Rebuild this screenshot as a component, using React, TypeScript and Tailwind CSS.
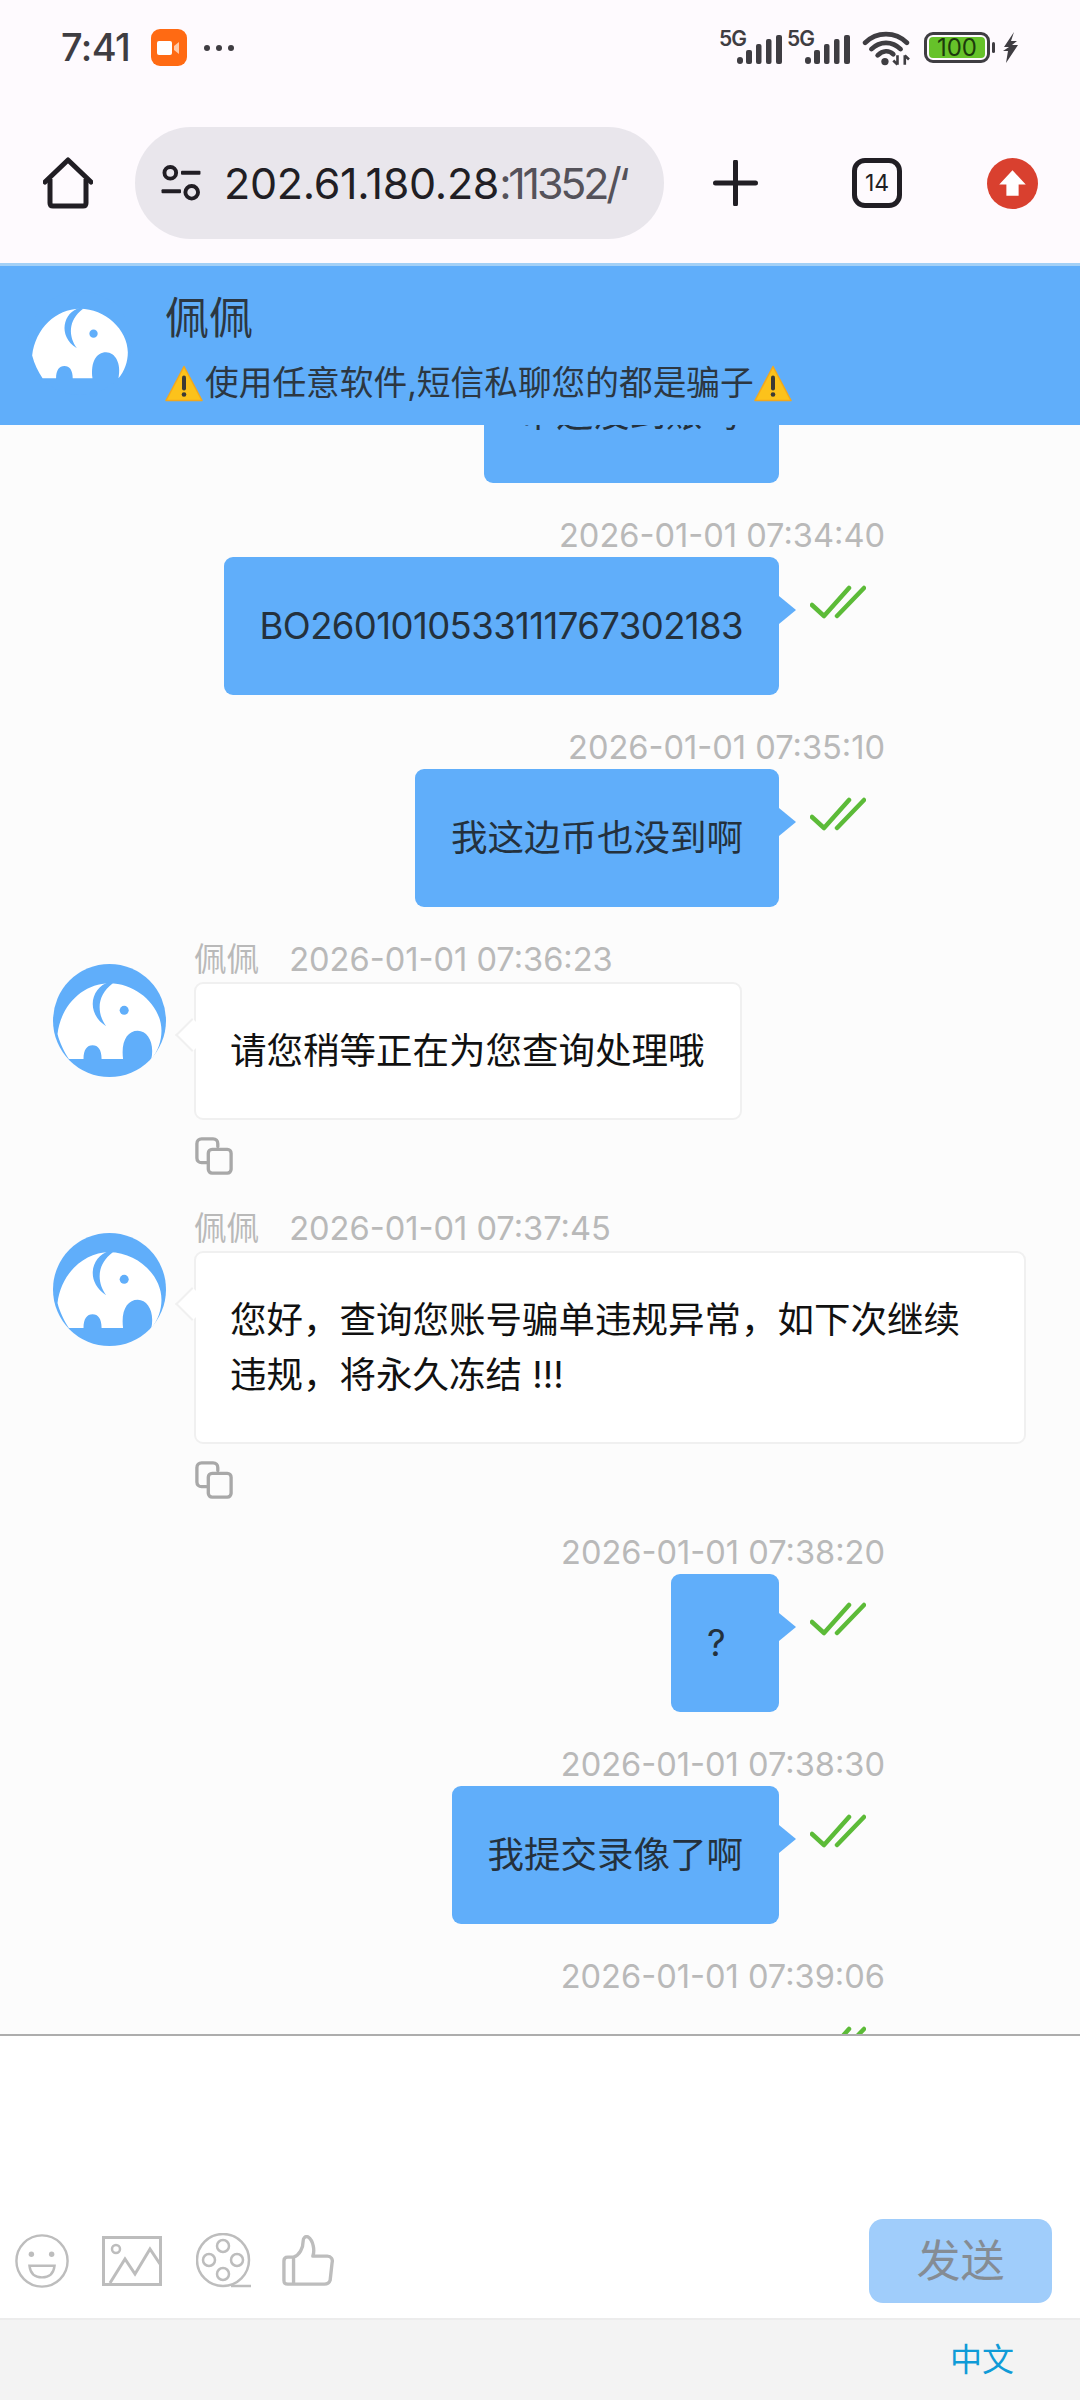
import type { ReactNode } from 'react'

type Msg =
  | { side: 'me'; time: string; text?: string }
  | { side: 'them'; time: string; lines: string }

const MESSAGES: Msg[] = [
  { side: 'me', time: '2026-01-01 07:34:40', text: 'BO2601010533111767302183' },
  { side: 'me', time: '2026-01-01 07:35:10', text: '我这边币也没到啊' },
  { side: 'them', time: '2026-01-01 07:36:23', lines: '请您稍等正在为您查询处理哦' },
  { side: 'them', time: '2026-01-01 07:37:45', lines: '您好，查询您账号骗单违规异常，如下次继续违规，将永久冻结 !!!' },
  { side: 'me', time: '2026-01-01 07:38:20', text: '?' },
  { side: 'me', time: '2026-01-01 07:38:30', text: '我提交录像了啊' },
  { side: 'me', time: '2026-01-01 07:39:06' },
]

function Elephant({ size, ring }: { size: number; ring: string }) {
  return (
    <svg width={size} height={size} viewBox="0 0 100 100" className="shrink-0">
      <circle cx="50" cy="50" r="50" fill={ring} />
      <path
        d="M50 17C27 17 7 36 4 62C6 70 10 78 14 84L27 84C27 76 30 72 35 72C40 72 43 76 43 84L62 84C60 68 66 59 75 59C84 59 90 70 87 84C93 77 96 68 96 59C96 37 74 17 50 17Z"
        fill="#fff"
      />
      <path d="M50 16C34 20 28 43 47 55C39 44 38 28 53 17Z" fill={ring} />
      <circle cx="63" cy="41" r="4" fill={ring} />
    </svg>
  )
}

function Warn() {
  return (
    <svg width="38" height="37" viewBox="0 0 38 36" className="shrink-0 inline-block">
      <path d="M19 1L37 35H1Z" fill="#fcc21b" stroke="#f2a81d" strokeWidth="1.5" strokeLinejoin="round" />
      <rect x="17" y="10" width="4" height="15" rx="2" fill="#3d3a35" />
      <circle cx="19" cy="29" r="2.3" fill="#3d3a35" />
    </svg>
  )
}

function Signal() {
  return (
    <svg width="63" height="34" viewBox="0 0 63 34" className="shrink-0 overflow-visible">
      <text x="0" y="15" fontSize="21" fontWeight="600" fill="#3f3d42" fontFamily="Inter, sans-serif" letterSpacing="-1">5G</text>
      <rect x="18" y="26" width="6" height="7" rx="3" fill="#3f3d42" />
      <rect x="27" y="19" width="6" height="14" rx="2" fill="#3f3d42" />
      <rect x="37" y="13" width="5.5" height="20" rx="2" fill="#3f3d42" />
      <rect x="47" y="8" width="5.5" height="25" rx="2" fill="#3f3d42" />
      <rect x="57" y="4" width="6" height="29" rx="2" fill="#3f3d42" />
    </svg>
  )
}

function StatusBar() {
  return (
    <div className="h-[95px] flex items-center pl-[61px] pr-[61px] text-[#3f3d42]">
      <span className="w-[70px] text-[38px] font-medium tracking-[-0.6px]">7:41</span>
      <div className="ml-[20px] w-[36px] h-[37px] rounded-[9px] bg-[#ff6a13] flex items-center justify-center">
        <svg width="24" height="16" viewBox="0 0 24 16">
          <rect x="0" y="1" width="15" height="14" rx="2" fill="#fff" />
          <path d="M17 6L22 2V14L17 10Z" fill="#ffc9a8" />
        </svg>
      </div>
      <div className="ml-[17px] flex gap-[6px]">
        <span className="w-[6px] h-[6px] rounded-full bg-[#3f3d42]" />
        <span className="w-[6px] h-[6px] rounded-full bg-[#3f3d42]" />
        <span className="w-[6px] h-[6px] rounded-full bg-[#3f3d42]" />
      </div>
      <div className="ml-auto flex items-center">
        <Signal />
        <div className="w-[5px]" />
        <Signal />
        <svg width="48" height="36" viewBox="0 0 46 34" className="ml-[12px]">
          <path d="M3 12C14 1 32 1 43 12" fill="none" stroke="#3f3d42" strokeWidth="4.5" strokeLinecap="round" />
          <path d="M9 18C17 10 29 10 37 18" fill="none" stroke="#3f3d42" strokeWidth="4.5" strokeLinecap="round" />
          <path d="M15 24C20 19 26 19 30 23" fill="none" stroke="#3f3d42" strokeWidth="4.5" strokeLinecap="round" />
          <circle cx="22" cy="30" r="3.5" fill="#3f3d42" />
          <path d="M34 24V33M30 29L34 33M41 33V24M41 24L45 28" stroke="#3f3d42" strokeWidth="2.5" fill="none" />
        </svg>
        <div className="ml-[14px] w-[66px] h-[31px] rounded-[9px] border-[3px] border-[#3f3d42] p-[2px] flex">
          <div className="flex-1 rounded-[4px] bg-[#66c22a] flex items-center justify-center text-[24px] leading-none text-[#1c3a0c]">100</div>
        </div>
        <div className="ml-[2px] w-[3px] h-[11px] rounded-full bg-[#3f3d42]" />
        <svg width="17" height="31" viewBox="0 0 15 31" className="ml-[7px]">
          <path d="M11 0L1 15H6L0 19H5L3 31L15 13H9L14 9H8Z" fill="#3f3d42" />
        </svg>
      </div>
    </div>
  )
}

function BrowserBar() {
  return (
    <div className="h-[168px] flex items-start pt-[32px]">
      <div className="w-[135px] h-[112px] flex items-center pl-[43px]">
        <svg width="50" height="52" viewBox="0 0 50 52">
          <path d="M2 25L25 3L48 25" fill="none" stroke="#211e24" strokeWidth="5" strokeLinecap="round" strokeLinejoin="round" />
          <path d="M7 22V46C7 48 8 49 10 49H40C42 49 43 48 43 46V22" fill="none" stroke="#211e24" strokeWidth="5" strokeLinejoin="round" />
        </svg>
      </div>
      <div className="w-[529px] h-[112px] rounded-full bg-[#e9e6ec] flex items-center pl-[24px]">
        <svg width="44" height="37" viewBox="0 0 44 38" className="shrink-0">
          <circle cx="11" cy="8" r="6" fill="none" stroke="#211e24" strokeWidth="4" />
          <rect x="22" y="6" width="20" height="4" rx="1" fill="#211e24" />
          <rect x="2" y="25" width="20" height="4" rx="1" fill="#211e24" />
          <circle cx="33" cy="28" r="6.5" fill="none" stroke="#211e24" strokeWidth="4" />
        </svg>
        <div className="ml-[21px] whitespace-nowrap text-[43px] leading-none text-[#211e24] tracking-[-0.3px]">
          202.61.180.28<span className="text-[#55525a] tracking-[-3.2px]">:11352/‘</span>
        </div>
      </div>
      <div className="flex-1 h-[112px] flex items-center pl-[49px]">
        <svg width="45" height="46" viewBox="0 0 44 46">
          <path d="M22 2V44M2 23H42" stroke="#211e24" strokeWidth="5" strokeLinecap="round" />
        </svg>
        <div className="ml-[94px] w-[50px] h-[50px] rounded-[13px] border-[5px] border-[#211e24] flex items-center justify-center text-[23px] leading-none text-[#211e24]">14</div>
        <svg width="51" height="51" viewBox="0 0 50 50" className="ml-[85px]">
          <circle cx="25" cy="25" r="25" fill="#d9402f" />
          <path d="M25 12L38 26H31V37H19V26H12Z" fill="#fff" />
        </svg>
      </div>
    </div>
  )
}

function ChatHeader() {
  return (
    <div className="relative z-10 h-[162px] bg-[#60aefa] border-t-[3px] border-[#a3d0f6] flex pl-[28px] shrink-0">
      <div className="pt-[25px]">
        <Elephant size={104} ring="#60aefa" />
      </div>
      <div className="ml-[33px] text-[#2c3742]">
        <div className="text-[44px] leading-[56px] mt-[24px]">佩佩</div>
        <div className="flex items-center text-[33.7px] leading-[44px] mt-[15px]">
          <Warn />
          <span className="ml-[2px]">使用任意软件,短信私聊您的都是骗子</span>
          <Warn />
        </div>
      </div>
    </div>
  )
}

function Checks() {
  return (
    <svg width="56" height="34" viewBox="0 0 56 34" className="absolute left-[31px] top-[28px]">
      <path d="M2 20L14 31L39 3M27 31L54 3" fill="none" stroke="#5cbb38" strokeWidth="4.5" strokeLinecap="round" strokeLinejoin="round" />
    </svg>
  )
}

function Stamp({ children }: { children: ReactNode }) {
  return <div className="h-[74px] pt-[35px] text-[32.6px] leading-[34px] text-[#b9b9b9] whitespace-nowrap">{children}</div>
}

function MineBubble({ text, wide }: { text?: string; wide?: boolean }) {
  // long order numbers sit a little tighter than the CJK messages
  const isCode = !!text && /^[A-Z0-9]+$/.test(text)
  return (
    <div className="flex justify-end">
      {text ? (
        <div className={`relative rounded-[9px] bg-[#60aefa] px-[36px] py-[41px] text-[36.5px] leading-[56px] text-[#24313d] whitespace-nowrap ${wide ? 'min-w-[295px]' : 'min-w-[108px]'} ${isCode ? 'tracking-[-0.6px]' : ''}`}>
          {text}
          <span className="absolute right-[-17px] top-[39px] w-0 h-0 border-y-[14px] border-y-transparent border-l-[17px] border-l-[#60aefa]" />
        </div>
      ) : (
        <div className="h-[138px]" />
      )}
      <div className="relative w-[106px]">
        <Checks />
      </div>
    </div>
  )
}

function Mine({ time, text }: { time: string; text?: string }) {
  return (
    <div className="pr-[195px] flex flex-col">
      <div className="flex justify-end">
        <Stamp>{time}</Stamp>
      </div>
      <MineBubble text={text} />
    </div>
  )
}

function Theirs({ time, lines }: { time: string; lines: string }) {
  return (
    <div>
      <div className="h-[75px] pl-[194px] pt-[35px] flex text-[32.6px] leading-[34px] text-[#b9b9b9]">
        <span>佩佩</span>
        <span className="ml-[30px]">{time}</span>
      </div>
      <div className="flex pl-[53px]">
        <div className="-mt-[18px]">
          <Elephant size={113} ring="#60aefa" />
        </div>
        <div className="ml-[28px] relative max-w-[832px] rounded-[9px] bg-white border-2 border-[#f0f0f0] pl-[34px] pr-[35px] pt-[40px] pb-[39px] text-[36.5px] leading-[55px] text-[#111]">
          {lines}
          <span className="absolute left-[-16px] top-[39px] w-[24px] h-[24px] rotate-45 bg-white border-l-2 border-b-2 border-[#f0f0f0]" />
        </div>
      </div>
      <div className="pl-[195px] pt-[17px] h-[56px]">
        <svg width="38" height="38" viewBox="0 0 40 40" className="block">
          <path d="M12 27H7C4 27 2 25 2 22V7C2 4 4 2 7 2H19C22 2 24 4 24 7V10" fill="none" stroke="#a8a8a8" strokeWidth="3.5" strokeLinecap="round" />
          <rect x="14" y="13" width="24" height="25" rx="4" fill="none" stroke="#a8a8a8" strokeWidth="3.5" />
        </svg>
      </div>
    </div>
  )
}

function Toolbar() {
  return (
    <div className="flex items-center pl-[14px]">
      <svg width="56" height="56" viewBox="0 0 58 58">
        <circle cx="29" cy="29" r="26.5" fill="none" stroke="#bdbdbd" strokeWidth="2.5" />
        <circle cx="18" cy="22" r="2.8" fill="#bdbdbd" />
        <circle cx="39" cy="22" r="2.8" fill="#bdbdbd" />
        <path d="M16 34H42C41 42 36 46 29 46C22 46 17 42 16 34Z" fill="none" stroke="#bdbdbd" strokeWidth="2.5" />
      </svg>
      <svg width="60" height="50" viewBox="0 0 60 50" className="ml-[32px]">
        <rect x="1.5" y="1.5" width="57" height="47" fill="none" stroke="#bdbdbd" strokeWidth="3" />
        <circle cx="14" cy="13" r="4" fill="none" stroke="#bdbdbd" strokeWidth="2.5" />
        <path d="M8 47L23 23L33 38L48 13L58 28" fill="none" stroke="#bdbdbd" strokeWidth="3" />
      </svg>
      <svg width="56" height="56" viewBox="0 0 56 56" className="ml-[34px]">
        <circle cx="27" cy="27" r="26" fill="none" stroke="#bdbdbd" strokeWidth="2.5" />
        <circle cx="27" cy="13" r="6" fill="none" stroke="#bdbdbd" strokeWidth="2.5" />
        <circle cx="27" cy="41" r="6" fill="none" stroke="#bdbdbd" strokeWidth="2.5" />
        <circle cx="13" cy="27" r="6" fill="none" stroke="#bdbdbd" strokeWidth="2.5" />
        <circle cx="41" cy="27" r="6" fill="none" stroke="#bdbdbd" strokeWidth="2.5" />
        <path d="M35 53H55" stroke="#bdbdbd" strokeWidth="2.5" />
      </svg>
      <svg width="52" height="52" viewBox="0 0 54 54" className="ml-[30px]">
        <path d="M12 23H6C3 23 2 25 2 27V47C2 50 3 51 6 51H44C47 51 49 50 50 47L52 29C53 25 51 22 47 22H32C34 17 33 6 27 2C24 1 22 3 22 6C22 14 18 21 12 23ZM12 23V51" fill="none" stroke="#bdbdbd" strokeWidth="3.5" strokeLinejoin="round" />
      </svg>
    </div>
  )
}

export default function App() {
  return (
    <div className="w-[1080px] h-[2400px] flex flex-col overflow-hidden bg-[#fefafe] font-['Inter','Noto_Sans_CJK_SC',sans-serif]">
      <StatusBar />
      <BrowserBar />
      <ChatHeader />

      {/* message list, scrolled part way down */}
      <div className="h-[1611px] bg-[#fcfcfc] overflow-hidden border-b-2 border-[#adadad] shrink-0">
        <div className="-mt-[80px]">
          <div className="pr-[195px]">
            <MineBubble text="币还没到账吗" wide />
          </div>
          {MESSAGES.map((m, i) =>
            m.side === 'me' ? (
              <Mine key={i} time={m.time} text={m.text} />
            ) : (
              <Theirs key={i} time={m.time} lines={m.lines} />
            ),
          )}
        </div>
      </div>

      <div className="h-[282px] bg-white flex items-end justify-between pb-[15px] shrink-0">
        <div className="pb-[14px]">
          <Toolbar />
        </div>
        <button className="mr-[28px] w-[183px] h-[84px] rounded-[14px] bg-[#a0cdfb] text-[44px] text-[#858c94]">发送</button>
      </div>

      <div className="flex-1 bg-[#f3f3f3] border-t-2 border-[#ececec] flex items-center justify-end pr-[66px]">
        <span className="text-[32px] text-[#0f9bd7]">中文</span>
      </div>
    </div>
  )
}
